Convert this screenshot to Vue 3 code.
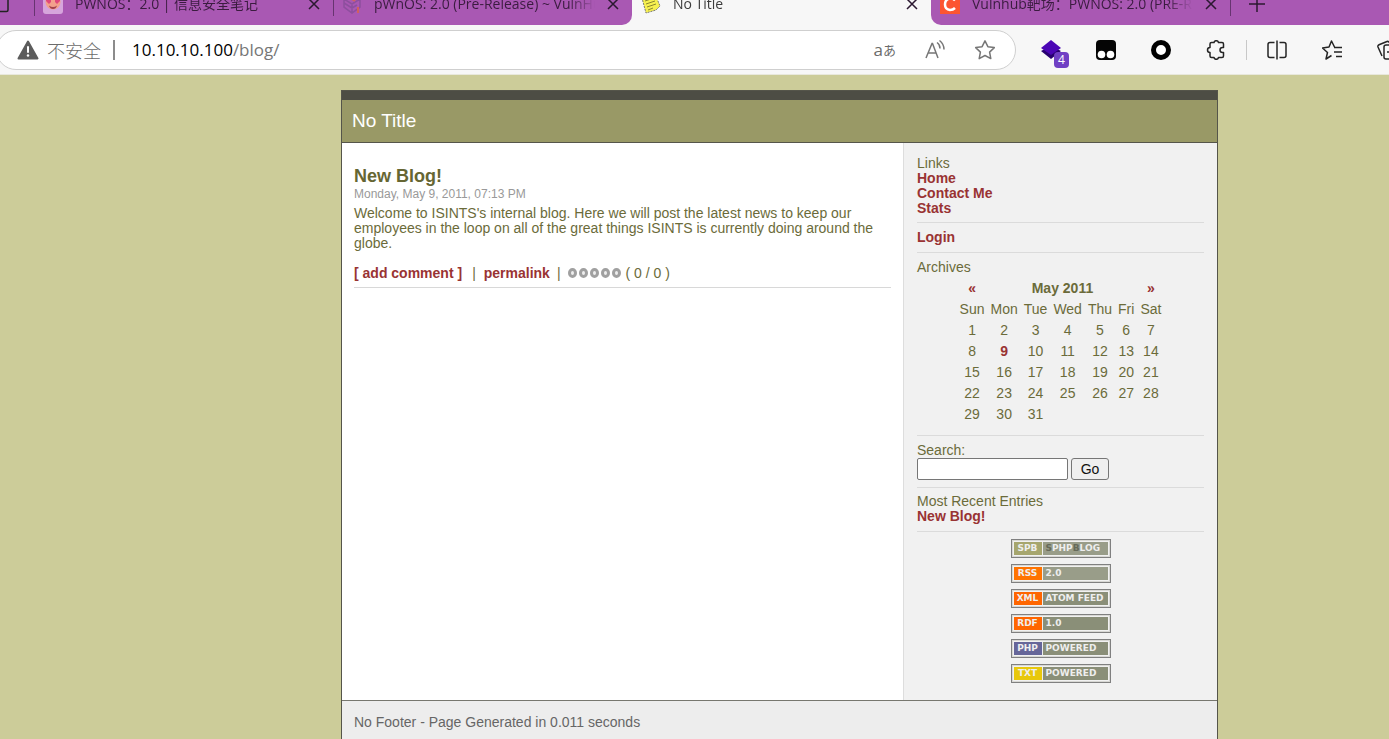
<script setup>
import { ref } from 'vue'

const search = ref('')
const weekdays = ['Sun', 'Mon', 'Tue', 'Wed', 'Thu', 'Fri', 'Sat']
const weeks = [0, 1, 2, 3, 4].map((w) =>
  [1, 2, 3, 4, 5, 6, 7].map((d) => (w * 7 + d <= 31 ? w * 7 + d : ''))
)
const feeds = [
  { tag: 'RSS', label: '2.0', kind: 'rss' },
  { tag: 'XML', label: 'ATOM FEED', kind: 'xml' },
  { tag: 'RDF', label: '1.0', kind: 'rdf' },
  { tag: 'PHP', label: 'POWERED', kind: 'php' },
  { tag: 'TXT', label: 'POWERED', kind: 'txt' }
]
</script>

<template>
  <div class="window">
    <header class="tabs">
      <div class="group left">
        <div class="stub">
          <svg width="12" height="24" viewBox="0 0 12 24"><path d="M0 19.5h6.500q1.500 0 1.500-1.500V6" fill="none" stroke="#222" stroke-width="1.500" /></svg>
        </div>
        <div class="tab">
          <span class="divider"></span>
          <svg class="fav" viewBox="0 0 20 20"><rect width="20" height="20" rx="3" fill="#d6a5dc" /><circle cx="10" cy="8" r="7.500" fill="#f3a08c" /><path d="M3 4h5v4l-2 2-3-3zM12 4h5v3l-3 3-2-2z" fill="#e0487a" /><path d="M6 11.500q4 3 8 0-1 3.500-4 3.500t-4-3.500z" fill="#a3414d" /></svg>
          <span class="title">PWNOS：2.0 | 信息安全笔记</span>
          <button class="close" aria-label="Close tab"><svg width="12" height="12" viewBox="0 0 12 12"><path d="M1 1l10 10M11 1L1 11" /></svg></button>
        </div>
        <div class="tab">
          <span class="divider"></span>
          <svg class="fav" viewBox="0 0 20 20"><path d="M2 5l8-4 8 4v8l-8 6-8-6zM2 5l8 5 8-5M2 9l8 5 5-3M10 10v9" fill="none" stroke="#8d4f9e" stroke-width="1.500" /><path d="M16 13v6" stroke="#d1605e" stroke-width="2" /><path d="M10 5l3 2" stroke="#d1605e" stroke-width="2" /></svg>
          <span class="title">pWnOS: 2.0 (Pre-Release) ~ VulnHub</span>
          <button class="close" aria-label="Close tab"><svg width="12" height="12" viewBox="0 0 12 12"><path d="M1 1l10 10M11 1L1 11" /></svg></button>
        </div>
      </div>
      <div class="tab active">
        <span class="divider"></span>
        <svg class="fav" viewBox="0 0 20 20"><path d="M1 4L14 0l5 12-4 4-10 3z" fill="#f6f04f" stroke="#777" stroke-dasharray="2 1" /><path d="M4 7l9-3M5 10l9-3M6 13l9-3M7 16l5-2" stroke="#8b872f" /></svg>
        <span class="title">No Title</span>
        <button class="close" aria-label="Close tab"><svg width="12" height="12" viewBox="0 0 12 12"><path d="M1 1l10 10M11 1L1 11" /></svg></button>
      </div>
      <div class="group right">
        <div class="tab">
          <span class="divider"></span>
          <svg class="fav" viewBox="0 0 20 20"><rect width="20" height="20" fill="#fc5531" /><path d="M15 6.500Q13 4 9.500 4.500 5 5.500 5 10.500T10 16q3 0 5-2" fill="none" stroke="#fff" stroke-width="2.500" /></svg>
          <span class="title">Vulnhub靶场：PWNOS: 2.0 (PRE-RELEASE)</span>
          <button class="close" aria-label="Close tab"><svg width="12" height="12" viewBox="0 0 12 12"><path d="M1 1l10 10M11 1L1 11" /></svg></button>
        </div>
        <span class="divider"></span>
        <button class="new" aria-label="New tab"><svg width="18" height="18" viewBox="0 0 18 18"><path d="M9 1v16M1 9h16" /></svg></button>
      </div>
    </header>

    <nav class="toolbar">
      <div class="address">
        <svg width="22" height="20" viewBox="0 0 22 20"><path d="M11 1.500L20.500 18.500h-19z" fill="#5c5c5c" stroke="#5c5c5c" stroke-width="2" stroke-linejoin="round" /><path d="M11 7v5" stroke="#fff" stroke-width="2" stroke-linecap="round" /><circle cx="11" cy="15.500" r="1.200" fill="#fff" /></svg>
        <span class="unsafe">不安全</span>
        <span class="bar"></span>
        <span class="url">10.10.10.100<span class="path">/blog/</span></span>
        <button class="translate" aria-label="Translate">a<small>あ</small></button>
        <button aria-label="Read aloud"><svg width="22" height="22" viewBox="0 0 22 22"><path d="M2 19L8 4.500h.5L14 19M4 14h8M13 3.500q3 2 3 6M15.500 1.500Q20 5 20 10.500" /></svg></button>
        <button aria-label="Add to favourites"><svg width="22" height="22" viewBox="0 0 22 22"><path d="M11 1.800l2.900 5.900 6.400.9-4.700 4.500 1.200 6.500L11 16.500l-5.800 3.100 1.200-6.500L1.700 8.600l6.400-.9z" stroke-linejoin="round" /></svg></button>
      </div>
      <div class="extensions">
        <button aria-label="Wappalyzer">
          <svg viewBox="0 0 20 20"><path d="M0 11l10-5 10 5-10 8z" fill="#280070" /><path d="M10 0l10 8-10 7L0 8z" fill="#4b06b5" /></svg>
          <span class="count">4</span>
        </button>
        <button aria-label="Tampermonkey"><svg viewBox="0 0 20 20"><rect width="20" height="20" rx="4" fill="#050505" /><circle cx="5.500" cy="14.500" r="3.800" fill="#fff" /><circle cx="14.500" cy="14.500" r="3.800" fill="#fff" /></svg></button>
        <button aria-label="Recorder"><svg viewBox="0 0 20 20"><circle cx="10" cy="10" r="7.500" fill="#fff" stroke="#000" stroke-width="5" /></svg></button>
        <button aria-label="Extensions"><svg class="line" viewBox="0 0 20 20"><path d="M5.500 2.500H8a2.300 2.300 0 0 1 4.500 0H16q1.500 0 1.500 1.500v3.500h-1a2.400 2.400 0 0 0 0 5h1V16q0 1.500-1.500 1.500h-3.500a2.300 2.300 0 0 1-4.500 0H5.500Q4 17.500 4 16v-3.500a2.500 2.500 0 0 1 0-5V4q0-1.500 1.500-1.500z" /></svg></button>
        <span class="rule"></span>
        <button aria-label="Split screen"><svg class="line" viewBox="0 0 20 20"><path d="M7.500 2.500H3Q1 2.500 1 4.500v11q0 2 2 2h4.500M12.500 2.500H17q2 0 2 2v11q0 2-2 2h-4.500M10 .5v19" /></svg></button>
        <button aria-label="Favourites"><svg class="line" viewBox="0 0 20 20"><path d="M12.500 7L9.500 1 7 7l-6.500 1 5 4.500L4 19l5.500-3.500M12 7.500h8M12 12h8M14 16.500h6" /></svg></button>
        <button aria-label="Collections"><svg class="line" viewBox="0 0 20 20"><path d="M5 16l-4-9q-.5-1.500 1-2.200L10 1.500q1.500-.5 2.500 1L13 4M9 5h10v14H9q-2 0-2-2V7q0-2 2-2zM10 12h8" /></svg></button>
      </div>
    </nav>

    <div class="page">
      <div class="site">
        <header class="masthead"><h1>No Title</h1></header>
        <div class="columns">
          <main>
            <article>
              <h2>New Blog!</h2>
              <p class="date">Monday, May 9, 2011, 07:13 PM</p>
              <p class="text">Welcome to ISINTS's internal blog. Here we will post the latest news to keep our employees in the loop on all of the great things ISINTS is currently doing around the globe.</p>
              <div class="actions">
                <a href="#comment">[ add comment ]</a>
                <span class="pipe first">|</span>
                <a href="#permalink">permalink</a>
                <span class="pipe">|</span>
                <span class="rating"><i v-for="n in 5" :key="n"></i></span>
                <span>( 0 / 0 )</span>
              </div>
            </article>
          </main>
          <aside>
            <section class="links">
              Links
              <a href="#home">Home</a>
              <a href="#contact">Contact Me</a>
              <a href="#stats">Stats</a>
            </section>
            <section><a href="#login">Login</a></section>
            <section>
              Archives
              <table>
                <thead>
                  <tr><td><a href="#prev">«</a></td><th colspan="5">May 2011</th><td><a href="#next">»</a></td></tr>
                  <tr><td v-for="d in weekdays" :key="d">{{ d }}</td></tr>
                </thead>
                <tbody>
                  <tr v-for="(week, i) in weeks" :key="i">
                    <td v-for="(day, j) in week" :key="j"><a v-if="day === 9" href="#day9">9</a><template v-else>{{ day }}</template></td>
                  </tr>
                </tbody>
              </table>
            </section>
            <section>
              <label for="search">Search:</label>
              <form @submit.prevent><input id="search" v-model="search" type="text" /><button type="submit">Go</button></form>
            </section>
            <section class="recent">
              Most Recent Entries
              <a href="#entry">New Blog!</a>
            </section>
            <div class="badges">
              <a class="badge spb" href="#spb"><b>SPB</b><span><em>S</em>PHP<em>B</em>LOG</span></a>
              <a v-for="f in feeds" :key="f.kind" class="badge" :class="f.kind" :href="'#' + f.kind"><b>{{ f.tag }}</b><span>{{ f.label }}</span></a>
            </div>
          </aside>
        </div>
        <footer>No Footer - Page Generated in 0.011 seconds</footer>
      </div>
    </div>
  </div>
</template>

<style>
body { margin: 0; }
</style>

<style scoped>
* { box-sizing: border-box; }
.window { min-height: 100vh; display: flex; flex-direction: column; overflow: hidden; background: #cccc99; font: 14px/15px "Liberation Sans", Arial, sans-serif; color: #6b6b3a; }
button { padding: 0; border: 0; background: none; display: flex; align-items: center; justify-content: center; flex: none; font: inherit; color: inherit; }
a { color: #993333; font-weight: bold; text-decoration: none; }
h1, h2, p { margin: 0; }

.tabs { height: 25px; flex: none; display: flex; align-items: flex-end; overflow: hidden; background: #f7f7f7; font: 14px/24px "Open Sans", "Noto Sans CJK SC", sans-serif; color: #3b1c40; }
.group { display: flex; align-items: center; height: 43px; background: #a958b3; }
.left { border-bottom-right-radius: 10px; }
.right { flex: 1; border-bottom-left-radius: 10px; }
.stub { width: 34px; height: 24px; }
.tab { width: 299px; height: 43px; flex: none; display: flex; align-items: center; padding-right: 13px; }
.divider { width: 1px; height: 24px; background: #673470; }
.active .divider, .right .tab .divider { background: transparent; }
.active { color: #3c3c3c; }
.fav { width: 20px; height: 20px; margin: 0 12px 0 8px; flex: none; }
.title { flex: 1; min-width: 0; overflow: hidden; white-space: nowrap; margin-right: 12px; mask-image: linear-gradient(to right, #000 88%, transparent); }
.close svg, .new svg { fill: none; stroke: #2b1830; stroke-width: 1.500; }
.new { margin-left: 17px; }

.toolbar { height: 50px; flex: none; display: flex; align-items: center; background: #f7f7f7; border-bottom: 1px solid #e8e8dc; font: 17px/24px "Open Sans", "Noto Sans CJK SC", sans-serif; }
.address { flex: 1; height: 40px; margin-left: -4px; padding: 0 19px 0 20px; display: flex; align-items: center; background: #fff; border: 1px solid #cfcfcf; border-radius: 20px; color: #6b6b6b; }
.unsafe { margin-left: 8px; font-family: "Noto Sans CJK SC", sans-serif; font-size: 18px; font-weight: 300; }
.bar { width: 2px; height: 20px; margin: 0 17px 0 12px; background: #8c8c8c; }
.url { flex: 1; color: #000; }
.path { color: #767676; }
.address button { margin-left: 28px; }
.address button svg { fill: none; stroke: #767676; stroke-width: 1.500; }
.address small { font-size: 13px; }
.extensions { width: 373px; flex: none; display: flex; align-items: center; gap: 35px; padding-left: 25px; overflow: hidden; height: 40px; }
.extensions button { position: relative; width: 20px; height: 20px; }
.extensions svg { width: 20px; height: 20px; }
.line { fill: none; stroke: #252525; stroke-width: 1.500; stroke-linejoin: round; }
.rule { width: 1px; height: 20px; margin: 0 -15px; background: #c8c8c8; flex: none; }
.count { position: absolute; left: 13px; top: 12px; width: 15px; height: 16px; border-radius: 4px; background: #7040c4; color: #fff; font-size: 12px; line-height: 16px; text-align: center; }

.page { flex: 1; display: flex; padding: 15px 171px 0 341px; }
.site { flex: 1; display: flex; flex-direction: column; border: 1px solid #55554a; border-bottom: 0; background: #fff; }
.masthead { border-top: 9px solid #4d4d44; border-bottom: 1px solid #55554a; padding: 11px 10px; background: #999966; }
h1 { font-size: 19px; line-height: 20px; font-weight: normal; color: #fff; }
.columns { display: grid; grid-template-columns: 1fr 314px; }
main { padding: 23px 12px; }
article { border-bottom: 1px solid #d8d8d8; padding-bottom: 6px; }
h2 { font-size: 18px; line-height: 20px; color: #666633; }
.date { font-size: 12px; line-height: 16px; color: #999; }
.text { margin: 4px 0 15px; }
.actions { display: flex; align-items: center; white-space: nowrap; }
.pipe { margin: 0 7px; }
.first { margin: 0 8px 0 10px; }
.rating { display: flex; gap: 2px; margin: 0 5px 2px 0; }
.rating i { width: 9px; height: 10px; border: 3px solid #a0a0a0; border-radius: 50%; background: #eee; }
aside { border-left: 1px solid #ddd; background: #f1f1f1; padding: 5px 13px 17px; }
section { padding: 7px 0; border-bottom: 1px solid #dbdbdb; }
.links { padding: 8px 0 6px; }
.recent { padding: 6px 0 7px; }
section > a { display: block; }
label { display: block; }
table { border-collapse: collapse; margin: 3px auto; }
td, th { padding: 3px; text-align: center; line-height: 15px; height: 21px; }
form { display: flex; gap: 3px; }
input { width: 151px; height: 22px; border: 1px solid #767676; border-radius: 2px; background: #fff; font: inherit; }
form button { width: 38px; height: 22px; border: 1px solid #767676; border-radius: 3px; background: #efefef; color: #111; }
.badges { display: flex; flex-direction: column; align-items: center; gap: 6px; padding-top: 7px; }
.badge { display: flex; width: 100px; height: 19px; border: 1px solid #808080; outline: 1px solid #d8d8d4; outline-offset: -2px; padding: 2px; font: bold 9px/13px "DejaVu Sans", sans-serif; color: #eee; white-space: nowrap; }
.badge b { width: 29px; text-align: center; border-right: 1px solid #eee; background: #ff6600; }
.badge span { flex: 1; padding-left: 3px; background: #8a8f78; }
.badge em { font-style: normal; color: #666a59; }
.spb b { background: #a6a66e; }
.spb span, .rss span { background: #999d89; }
.rss b { background: #ff7300; }
.php b { background: #666699; }
.txt b { background: #e8c80c; }
footer { flex: 1; border-top: 1px solid #77776f; padding: 14px 12px 8px; background: #ededed; color: #666; }
</style>
